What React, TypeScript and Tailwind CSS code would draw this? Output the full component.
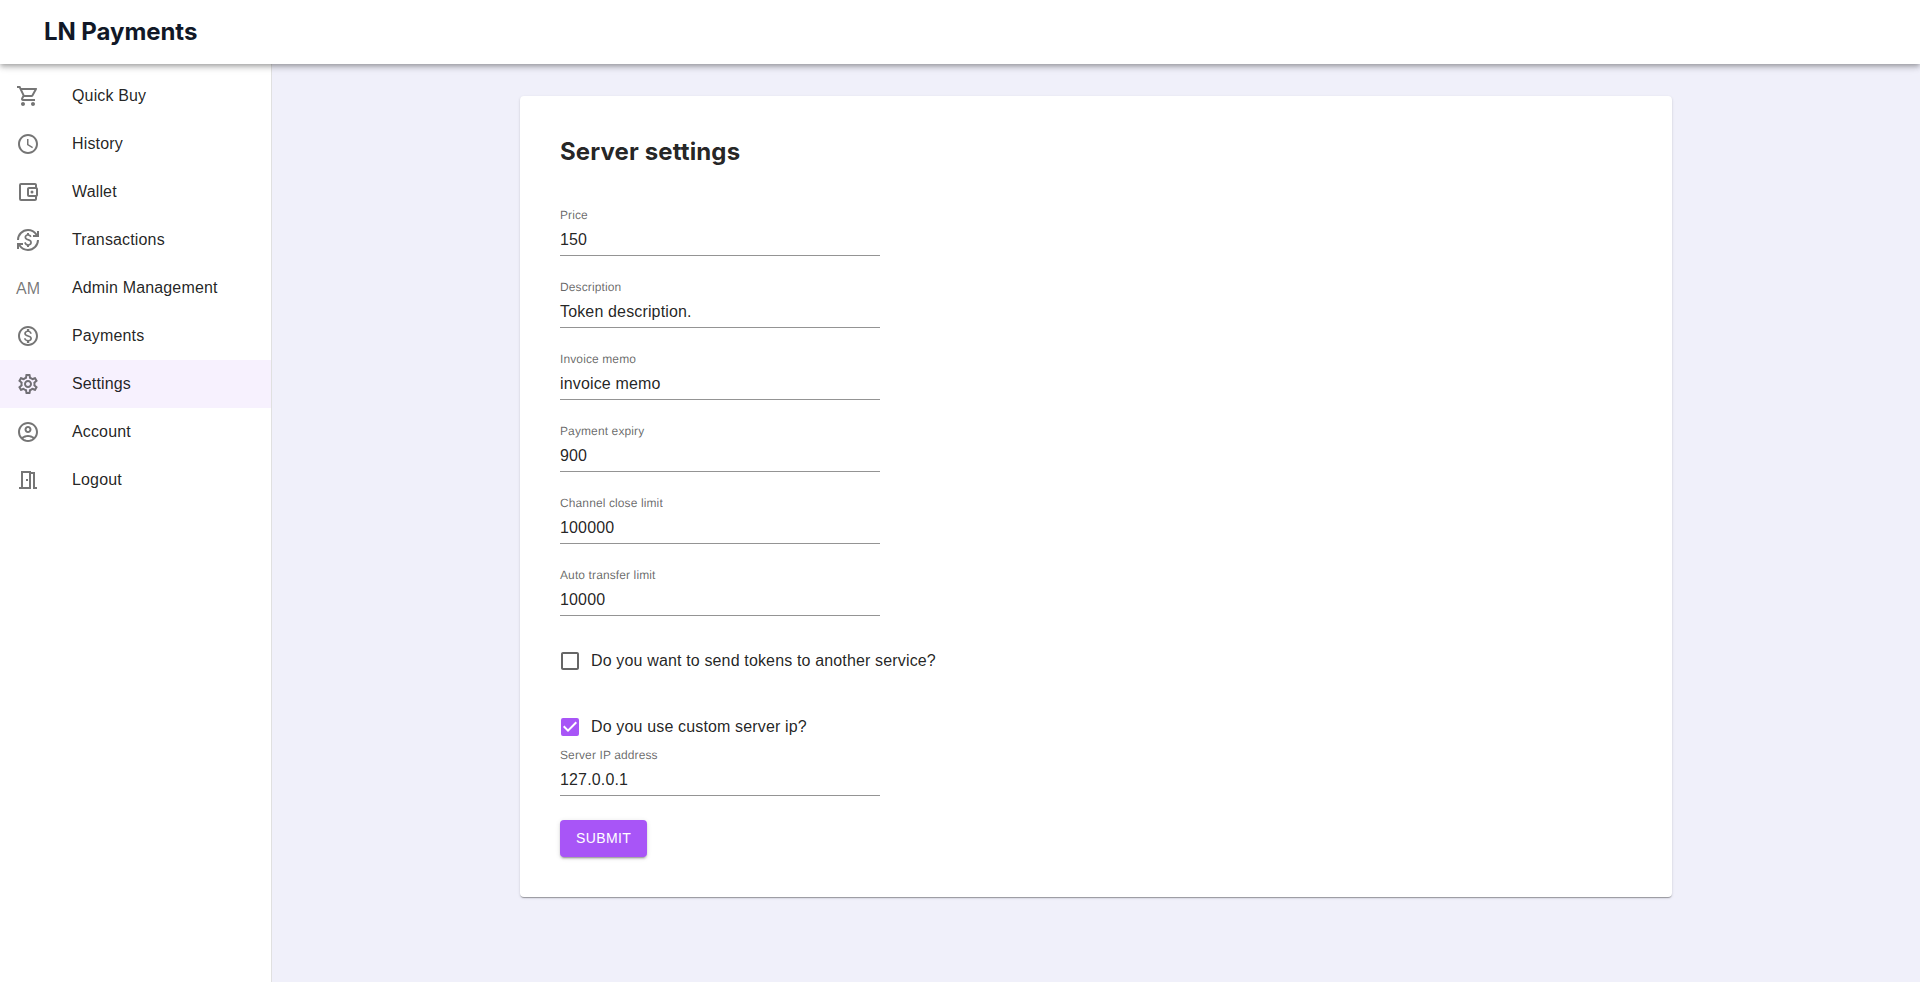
import React from 'react';
import { MdOutlineShoppingCart, MdAccessTime, MdOutlineAccountBalanceWallet, MdCurrencyExchange, MdOutlineSettings, MdOutlineAccountCircle, MdOutlineMeetingRoom, MdOutlineMonetizationOn, MdCheckBox, MdCheckBoxOutlineBlank } from 'react-icons/md';

const items: { label: string; icon: React.ReactNode; active?: boolean }[] = [
  { label: 'Quick Buy', icon: <MdOutlineShoppingCart size={24} /> },
  { label: 'History', icon: <MdAccessTime size={24} /> },
  { label: 'Wallet', icon: <MdOutlineAccountBalanceWallet size={24} /> },
  { label: 'Transactions', icon: <MdCurrencyExchange size={24} /> },
  { label: 'Admin Management', icon: <span className="block pt-0.5 tracking-[0.15px]">AM</span> },
  { label: 'Payments', icon: <MdOutlineMonetizationOn size={24} /> },
  { label: 'Settings', icon: <MdOutlineSettings size={24} />, active: true },
  { label: 'Account', icon: <MdOutlineAccountCircle size={24} /> },
  { label: 'Logout', icon: <MdOutlineMeetingRoom size={24} /> },
];

function Field({ label, value }: { label: string; value: string }) {
  return (
    <div className="flex h-12 w-80 flex-col border-b border-[#949494]">
      <label className="h-4 origin-top-left -translate-y-px scale-75 text-base leading-[23px] tracking-[0.15px] text-black/60 [text-rendering:geometricPrecision]">{label}</label>
      <div className="pt-1 text-base leading-[23px] tracking-[0.15px] text-black/87">{value}</div>
    </div>
  );
}

export default function App() {
  return (
    <div className="flex h-[982px] flex-col bg-[#f0f0fa] font-['Liberation_Sans',Arial,sans-serif] text-black/87">
      <header className="z-10 flex h-16 shrink-0 items-center bg-white pl-11 shadow-[0_2px_4px_-1px_rgba(0,0,0,0.2),0_4px_5px_0_rgba(0,0,0,0.14),0_1px_10px_0_rgba(0,0,0,0.12)]">
        <h1 className="font-[Inter,sans-serif] text-2xl font-bold tracking-[-0.06px] text-[#111827]">LN Payments</h1>
      </header>
      <div className="flex flex-1">
        <nav className="w-[272px] shrink-0 border-r border-black/12 bg-white pt-2">
          {items.map((it) => (
            <div key={it.label} className={`flex h-12 items-center pl-4 ${it.active ? 'bg-[#f7f1fe]' : ''}`}>
              <span className="w-14 text-base text-black/54">{it.icon}</span>
              <span className="text-base tracking-[0.15px]">{it.label}</span>
            </div>
          ))}
        </nav>
        <main className="flex flex-1 items-start pt-8 pl-[248px]">
          <section className="flex h-[801px] w-[1152px] flex-col items-start rounded bg-white px-10 pt-10 shadow-[0_2px_1px_-1px_rgba(0,0,0,0.2),0_1px_1px_0_rgba(0,0,0,0.14),0_1px_3px_0_rgba(0,0,0,0.12)]">
            <h2 className="font-[Inter,sans-serif] text-2xl font-bold tracking-[0.12px]">Server settings</h2>
            <div className="mt-10 flex flex-col gap-6">
              <Field label="Price" value="150" />
              <Field label="Description" value="Token description." />
              <Field label="Invoice memo" value="invoice memo" />
              <Field label="Payment expiry" value="900" />
              <Field label="Channel close limit" value="100000" />
              <Field label="Auto transfer limit" value="10000" />
            </div>
            <label className="mt-[33px] -ml-0.5 flex h-6 items-center gap-[9px] tracking-[0.15px]">
              <MdCheckBoxOutlineBlank size={24} className="text-black/60" />Do you want to send tokens to another service?
            </label>
            <label className="mt-[42px] mb-[9px] -ml-0.5 flex h-6 items-center gap-[9px] tracking-[0.15px]">
              <MdCheckBox size={24} className="text-[#a855f7]" />Do you use custom server ip?
            </label>
            <Field label="Server IP address" value="127.0.0.1" />
            <button className="mt-6 h-[37px] rounded bg-[#a855f7] px-4 pb-0.5 text-sm font-medium tracking-[0.4px] text-white shadow-[0_3px_1px_-2px_rgba(0,0,0,0.2),0_2px_2px_0_rgba(0,0,0,0.14),0_1px_5px_0_rgba(0,0,0,0.12)]">SUBMIT</button>
          </section>
        </main>
      </div>
    </div>
  );
}
